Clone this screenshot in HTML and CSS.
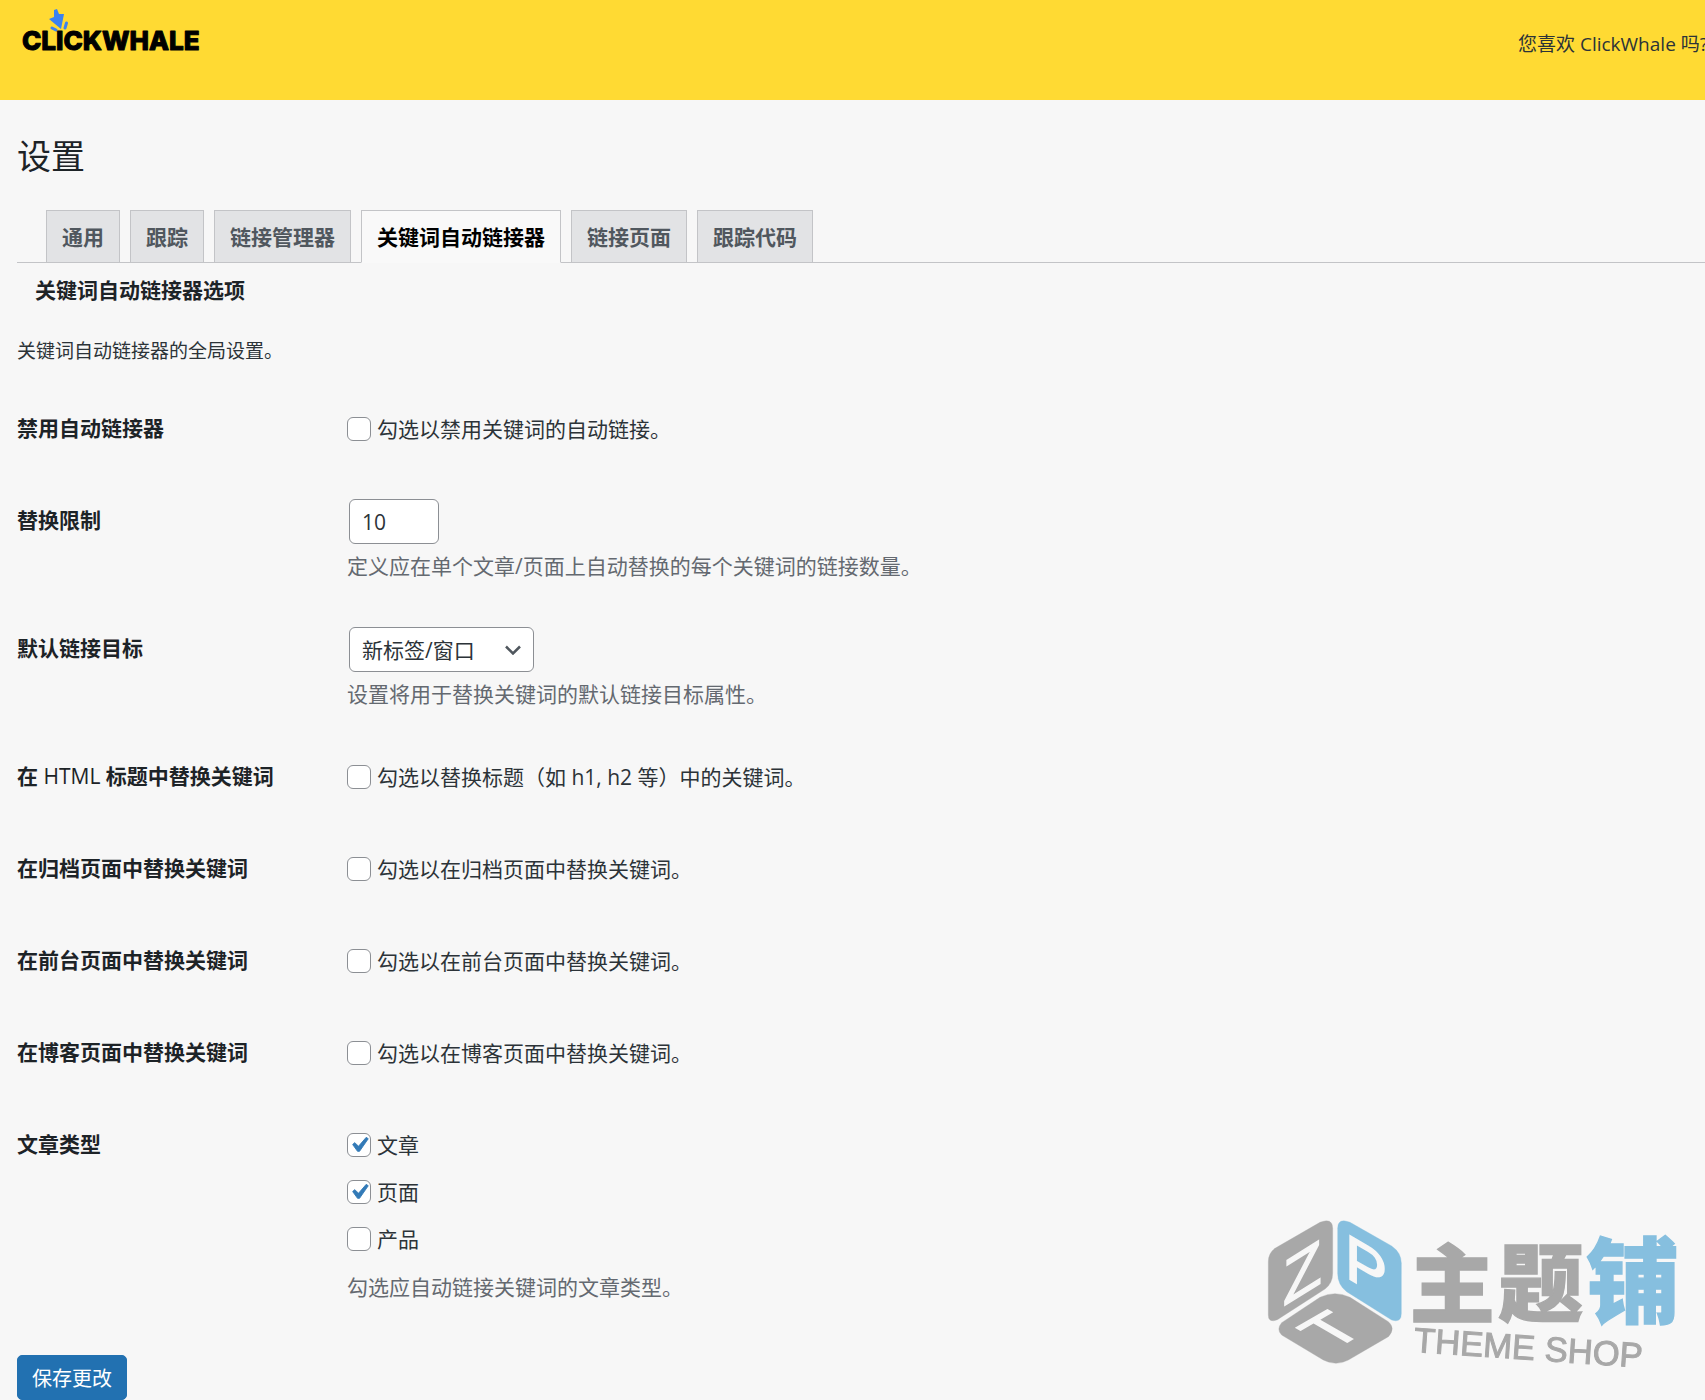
FILE: index.html
```html
<!DOCTYPE html>
<html lang="zh-CN">
<head>
    <meta charset="UTF-8">
    <meta name="viewport" content="width=device-width, initial-scale=1.0">
    <title>设置 - ClickWhale</title>
    <link rel="stylesheet" href="styles.css">
</head>
<body>
    <header class="topbar">
        <svg class="logo" width="190" height="46" viewBox="0 0 190 46" role="img" aria-label="ClickWhale">
            <path class="logo-arrow" d="M33 2 L36 1 L38 6 L43 6 L40 21 L28 11 L33 9 Z"/>
            <path class="logo-click" d="M31 20 L35 22 M45.500 15 L44 20"/>
            <text class="logo-text" x="1" y="42">CLICKWHALE</text>
        </svg>
        <p class="topbar-note">您喜欢 ClickWhale 吗?</p>
    </header>

    <main class="wrap">
        <h1>设置</h1>

        <nav class="tabs">
            <a class="tab" href="#general">通用</a>
            <a class="tab" href="#tracking">跟踪</a>
            <a class="tab" href="#link-manager">链接管理器</a>
            <a class="tab tab-active" href="#linker">关键词自动链接器</a>
            <a class="tab" href="#link-pages">链接页面</a>
            <a class="tab" href="#tracking-codes">跟踪代码</a>
        </nav>

        <form id="linker">
            <h2>关键词自动链接器选项</h2>
            <p class="intro">关键词自动链接器的全局设置。</p>

            <table class="form-table">
                <tr>
                    <th scope="row">禁用自动链接器</th>
                    <td>
                        <label class="choice"><input type="checkbox" name="disable">勾选以禁用关键词的自动链接。</label>
                    </td>
                </tr>
                <tr>
                    <th scope="row"><label for="limit">替换限制</label></th>
                    <td>
                        <input class="field field-number" type="text" inputmode="numeric" id="limit" value="10">
                        <p class="description">定义应在单个文章/页面上自动替换的每个关键词的链接数量。</p>
                    </td>
                </tr>
                <tr>
                    <th scope="row"><label for="target">默认链接目标</label></th>
                    <td>
                        <select class="field field-select" id="target">
                            <option>新标签/窗口</option>
                            <option>同一标签/窗口</option>
                        </select>
                        <p class="description">设置将用于替换关键词的默认链接目标属性。</p>
                    </td>
                </tr>
                <tr>
                    <th scope="row">在 <span class="latin">HTML</span> 标题中替换关键词</th>
                    <td>
                        <label class="choice"><input type="checkbox" name="headings">勾选以替换标题（如 h1, h2 等）中的关键词。</label>
                    </td>
                </tr>
                <tr>
                    <th scope="row">在归档页面中替换关键词</th>
                    <td>
                        <label class="choice"><input type="checkbox" name="archive">勾选以在归档页面中替换关键词。</label>
                    </td>
                </tr>
                <tr>
                    <th scope="row">在前台页面中替换关键词</th>
                    <td>
                        <label class="choice"><input type="checkbox" name="front">勾选以在前台页面中替换关键词。</label>
                    </td>
                </tr>
                <tr>
                    <th scope="row">在博客页面中替换关键词</th>
                    <td>
                        <label class="choice"><input type="checkbox" name="blog">勾选以在博客页面中替换关键词。</label>
                    </td>
                </tr>
                <tr>
                    <th scope="row">文章类型</th>
                    <td class="choices">
                        <label class="choice"><input type="checkbox" name="post" checked>文章</label>
                        <label class="choice"><input type="checkbox" name="page" checked>页面</label>
                        <label class="choice"><input type="checkbox" name="product">产品</label>
                        <p class="description">勾选应自动链接关键词的文章类型。</p>
                    </td>
                </tr>
            </table>

            <button class="button-primary" type="submit">保存更改</button>
        </form>
    </main>

    <!-- Marca d'água -->
    <svg class="watermark" width="414" height="154" viewBox="75 81 1242 462" role="img" aria-label="主题铺 THEME SHOP">
        <g class="wm-gray">
            <path d="M85 215 Q85 190 105 175 L240 97 Q278 82 278 115 V250 Q278 280 255 297 L112 389 Q85 400 85 375 Z"/>
            <path d="M240 322 Q285 300 330 322 L445 395 Q468 415 445 440 L325 510 Q288 530 250 510 L125 435 Q108 418 125 398 Z"/>
        </g>
        <path class="wm-blue" d="M293 115 Q293 82 330 97 L455 168 Q484 188 484 220 V370 Q484 400 455 390 L320 305 Q293 285 293 250 Z"/>
        <g class="wm-face">
            <text y="68" transform="translate(187 245) skewY(-32)">Z</text>
            <text y="68" transform="translate(378 228) skewY(30)">P</text>
            <text y="68" transform="matrix(.87 -.5 .87 .5 270 418)">T</text>
        </g>
        <text class="wm-name wm-gray" x="637" y="378">主</text>
        <text class="wm-name wm-gray" x="902" y="374">题</text>
        <text class="wm-name wm-last wm-blue" x="1178" y="377">铺</text>
        <text class="wm-sub" transform="translate(520 485) rotate(4)">THEME SHOP</text>
    </svg>
</body>
</html>
```
FILE: styles.css
```css
* {
    box-sizing: border-box;
}

body {
    margin: 0;
    background-color: #f7f7f7;
    color: #2c3338;
    font-family: "Open Sans", "Noto Sans CJK SC", sans-serif;
    font-size: 21px;
    line-height: 30px;
}

h1, h2, p {
    margin: 0;
}

/* Barra superior */
.topbar {
    display: flex;
    justify-content: space-between;
    align-items: flex-start;
    height: 100px;
    padding: 8px 0 0 21px;
    background-color: #ffda33;
}

.logo-arrow {
    fill: #3b82f0;
}

.logo-click {
    fill: none;
    stroke: #3b82f0;
    stroke-width: 3;
    stroke-linecap: round;
}

.logo-text {
    font-family: Inter, sans-serif;
    font-size: 26px;
    font-weight: 800;
    fill: #000;
    stroke: #000;
    stroke-width: 1;
    stroke-linejoin: round;
}

.topbar-note {
    flex: 0 0 187px;
    padding-top: 21px;
    overflow: hidden;
    white-space: nowrap;
    font-size: 19px;
}

/* Conteúdo */
.wrap {
    padding: 32px 0 0 17px;
}

h1 {
    font-size: 34px;
    font-weight: 400;
    line-height: 48px;
    color: #1d2327;
}

/* Abas */
.tabs {
    display: flex;
    gap: 10px;
    margin-top: 30px;
    padding-left: 29px;
    border-bottom: 1px solid #c3c4c7;
}

.tab {
    margin-bottom: -1px;
    padding: 12px 15px 10px;
    border: 1px solid #c3c4c7;
    background-color: #e2e3e5;
    color: #50575e;
    font-weight: 600;
    line-height: 29px;
    text-decoration: none;
}

.tab-active {
    border-bottom-color: #f9f9f9;
    background-color: #f9f9f9;
    color: #000;
}

h2 {
    padding: 12px 18px 0;
    font-size: 21px;
    font-weight: 600;
    color: #1d2327;
}

.intro {
    margin-top: 31px;
    font-size: 19px;
}

/* Tabela do formulário */
.form-table {
    width: 100%;
    margin-top: 17px;
    border-collapse: collapse;
}

.form-table th {
    width: 330px;
    padding: 30px 0;
    text-align: left;
    vertical-align: top;
    font-weight: 600;
    color: #1d2327;
}

.form-table td {
    padding: 22px 0;
    vertical-align: top;
}

.latin {
    font-weight: 500;
}

.choice {
    display: flex;
    align-items: center;
    gap: 6px;
    height: 48px;
}

.choices .choice {
    height: 47px;
}

.choice input {
    appearance: none;
    width: 24px;
    height: 24px;
    margin: 0;
    border: 1px solid #8c8f94;
    border-radius: 6px;
    background-color: #fff;
}

.choice input:checked {
    background-image: url("data:image/svg+xml,%3Csvg xmlns='http://www.w3.org/2000/svg' viewBox='0 0 20 20'%3E%3Cpath d='M14.83 4.89l1.34.94-5.81 8.38H9.02L5.78 9.67l1.34-1.25 2.57 2.4z' fill='%23337ab7' stroke='%23337ab7' stroke-width='.6'/%3E%3C/svg%3E");
    background-position: center;
    background-size: 30px;
    background-repeat: no-repeat;
}

.field {
    display: block;
    height: 45px;
    margin: 2px 2px 0;
    padding: 0 12px;
    border: 1px solid #8c8f94;
    border-radius: 6px;
    background-color: #fff;
    color: #2c3338;
    font-family: inherit;
    font-size: 21px;
}

.field-number {
    width: 90px;
}

.field-select {
    appearance: none;
    width: 185px;
    background-image: url("data:image/svg+xml,%3Csvg xmlns='http://www.w3.org/2000/svg' viewBox='0 0 16 10'%3E%3Cpath d='M1 1.500l7 7 7-7' fill='none' stroke='%2350575e' stroke-width='2.500'/%3E%3C/svg%3E");
    background-position: right 12px center;
    background-size: 16px 10px;
    background-repeat: no-repeat;
}

.description {
    margin-top: 7px;
    color: #646970;
}

.choices .description {
    margin-top: 10px;
}

.button-primary {
    display: block;
    height: 45px;
    margin-top: 31px;
    padding: 0 14px;
    border: 1px solid #2271b1;
    border-radius: 5px;
    background-color: #2271b1;
    color: #fff;
    font-family: inherit;
    font-size: 20px;
}

/* Marca d'água */
.watermark {
    position: fixed;
    right: 26px;
    bottom: 29px;
    overflow: visible;
    pointer-events: none;
}

.wm-gray {
    fill: #a8a8a8;
    stroke: #a8a8a8;
}

.wm-blue {
    fill: #86bfdf;
    stroke: #86bfdf;
}

.wm-face {
    fill: #f7f7f7;
    stroke: #f7f7f7;
    stroke-width: 5;
    font-family: "Liberation Sans", sans-serif;
    font-size: 190px;
    text-anchor: middle;
}

.wm-name {
    font-family: "Noto Sans CJK SC", sans-serif;
    font-size: 255px;
    font-weight: 900;
    stroke-width: 4;
    text-anchor: middle;
}

.wm-last {
    font-size: 280px;
}

.wm-sub {
    fill: #a8a8a8;
    stroke: #a8a8a8;
    stroke-width: 3;
    font-family: "Liberation Sans", sans-serif;
    font-size: 104px;
}
```
